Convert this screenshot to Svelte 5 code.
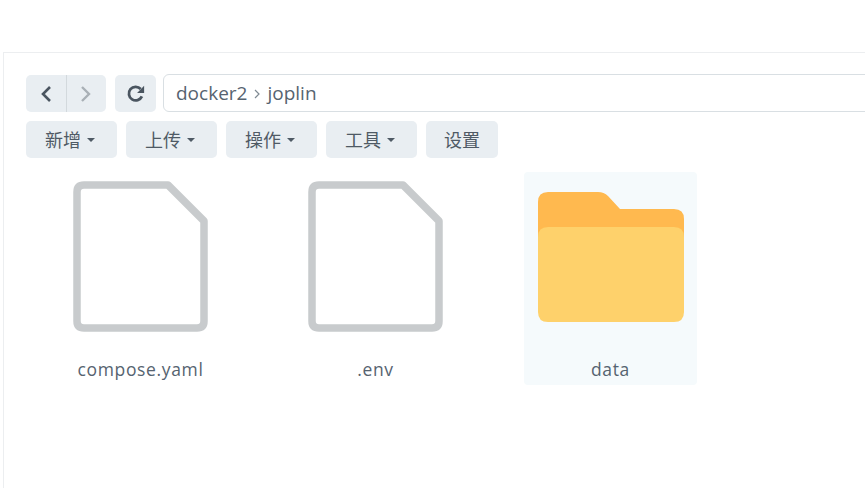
<script>
  const tools = [
    { label: '新增', caret: true },
    { label: '上传', caret: true },
    { label: '操作', caret: true },
    { label: '工具', caret: true },
    { label: '设置', caret: false }
  ];
  const files = [
    { name: 'compose.yaml', kind: 'file' },
    { name: '.env', kind: 'file' },
    { name: 'data', kind: 'folder' }
  ];
</script>

<div class="page">
  <div class="window">
    <div class="navrow">
      <div class="navgroup">
        <button class="nav back" aria-label="后退">
          <svg width="14" height="20" viewBox="0 0 14 20"><path d="M11 3 L4 10 L11 17" fill="none" stroke="#4a5560" stroke-width="2.6" /></svg>
        </button>
        <button class="nav fwd" aria-label="前进">
          <svg width="14" height="20" viewBox="0 0 14 20"><path d="M3 3 L10 10 L3 17" fill="none" stroke="#a9b0b6" stroke-width="2.4" /></svg>
        </button>
      </div>
      <button class="reload" aria-label="刷新">
        <svg width="22" height="22" viewBox="0 0 20 20"><path d="M15.4 12.2 A6.2 6.2 0 1 1 14.3 5.4" fill="none" stroke="#4a5560" stroke-width="2.5" /><path d="M17.4 2.4 V9 H11 Z" fill="#4a5560" /></svg>
      </button>
      <div class="path">
        <span>docker2</span>
        <svg class="sep" width="8" height="10" viewBox="0 0 8 10"><path d="M2 1 L6 5 L2 9" fill="none" stroke="#7f8a93" stroke-width="1.2" /></svg>
        <span>joplin</span>
      </div>
    </div>
    <div class="toolbar">
      {#each tools as t}
        <button class="tool" class:plain={!t.caret}>
          {t.label}{#if t.caret}<i class="caret"></i>{/if}
        </button>
      {/each}
    </div>
    <div class="grid">
      {#each files as f}
        <div class="item" class:selected={f.kind === 'folder'}>
          {#if f.kind === 'file'}
            <svg class="icon" width="135" height="151" viewBox="0 0 135 151">
              <path d="M4 11 Q4 4 11 4 H95 L131 40 V140 Q131 147 124 147 H11 Q4 147 4 140 Z" fill="#fff" stroke="#c8cbcd" stroke-width="7.5" stroke-linejoin="round" />
            </svg>
          {:else}
            <svg class="icon" width="146" height="131" viewBox="0 0 146 131">
              <path d="M0 10 Q0 0 10 0 H60 Q66 0 70 4 L82 17 H136 Q146 17 146 27 V50 H0 Z" fill="#ffb94f" />
              <path d="M0 45 Q0 35 10 35 H136 Q146 35 146 45 V120 Q146 130 136 130 H10 Q0 130 0 120 Z" fill="#fed16b" />
            </svg>
          {/if}
          <span class="name">{f.name}</span>
        </div>
      {/each}
    </div>
  </div>
</div>

<style>
  :global(body) {
    margin: 0;
    background: #fff;
  }
  .page {
    width: 865px;
    height: 488px;
    overflow: hidden;
    padding: 52px 0 0 3px;
    box-sizing: border-box;
    font-family: "Open Sans", "Noto Sans CJK SC", sans-serif;
  }
  .window {
    height: 436px;
    box-sizing: border-box;
    border-top: 1px solid #eceef0;
    border-left: 1px solid #eceef0;
    padding: 21px 0 0 22px;
    width: 900px;
  }
  button {
    border: 0;
    font: inherit;
    padding: 0;
    display: flex;
    align-items: center;
    justify-content: center;
    background: #e9eef2;
    color: #4f5a65;
  }
  .navrow {
    display: flex;
    height: 38px;
    align-items: stretch;
  }
  .navgroup {
    display: flex;
    flex: none;
    width: 80px;
    border-radius: 5px;
    overflow: hidden;
    height: 37px;
    margin-top: 1px;
  }
  .nav {
    flex: 1;
  }
  .back {
    border-right: 1px solid #d3d9dd;
  }
  .reload {
    flex: none;
    width: 41px;
    height: 37px;
    margin: 1px 0 0 9px;
    border-radius: 5px;
  }
  .path {
    margin-left: 7px;
    flex: 1;
    box-sizing: border-box;
    border: 1px solid #d9dfe3;
    border-radius: 6px;
    padding-left: 12px;
    display: flex;
    align-items: center;
    gap: 6px;
    font-size: 19px;
    color: #566370;
  }
  .sep {
    margin-top: 1px;
  }
  .toolbar {
    display: flex;
    gap: 9px;
    margin-top: 9px;
  }
  .tool {
    width: 91px;
    height: 37px;
    border-radius: 5px;
    font-size: 18px;
    gap: 6px;
    padding: 0 3px 2px 0;
  }
  .tool.plain {
    width: 72px;
    padding-right: 0;
  }
  .caret {
    width: 0;
    height: 0;
    margin-top: 2px;
    border-left: 4.5px solid transparent;
    border-right: 4.5px solid transparent;
    border-top: 4px solid #4f5a65;
  }
  .grid {
    display: flex;
    gap: 62px;
    margin: 14px 0 0 28px;
  }
  .item {
    width: 173px;
    height: 213px;
    display: flex;
    flex-direction: column;
    align-items: center;
    position: relative;
    border-radius: 4px;
  }
  .item .icon {
    margin-top: 9px;
    display: block;
  }
  .item.selected {
    background: #f5fafc;
  }
  .item.selected .icon {
    margin-top: 20px;
  }
  .name {
    position: absolute;
    top: 187px;
    left: 0;
    right: 0;
    text-align: center;
    font-size: 17.5px;
    letter-spacing: 0.65px;
    line-height: 20px;
    color: #566370;
  }
</style>
